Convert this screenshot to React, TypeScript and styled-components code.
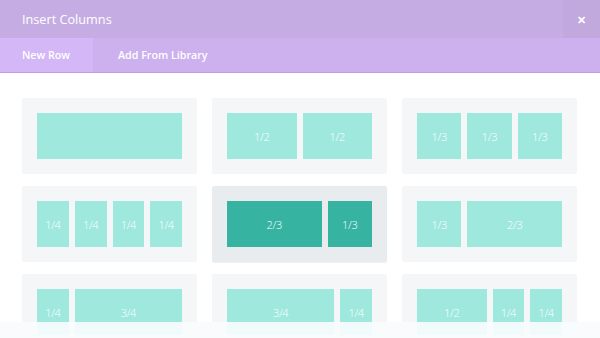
import * as React from "react";
import styled, {createGlobalStyle} from "styled-components";

const GlobalStyle = createGlobalStyle`
  html, body {
    margin: 0;
    padding: 0;
    background: #ffffff;
  }
  body {
    font-family: "Open Sans", "Liberation Sans", sans-serif;
  }
`;

const Modal = styled.div`
  position: relative;
  width: 600px;
  height: 338px;
  overflow: hidden;
  background: #ffffff;
`;

const TitleBar = styled.div`
  display: flex;
  align-items: center;
  height: 38px;
  background: #c5ade3;
`;

const Title = styled.div`
  flex: 1;
  padding-left: 22px;
  color: #ffffff;
  font-size: 12.7px;
`;

const CloseButton = styled.div`
  display: flex;
  align-items: center;
  justify-content: center;
  width: 37px;
  height: 38px;
  background: #c1a8dd;
  color: #ffffff;
  font-size: 11px;
  font-weight: 700;
`;

const TabBar = styled.div`
  display: flex;
  height: 34px;
  background: #ccb1ee;
  border-bottom: 1px solid #b99fe3;
`;

const Tab = styled.div<{ $active?: boolean }>`
  display: flex;
  align-items: center;
  box-sizing: border-box;
  white-space: nowrap;
  padding: 0 ${p => (p.$active ? "22px" : "25px")};
  width: ${p => (p.$active ? "93px" : "auto")};
  background: ${p => (p.$active ? "#d3b7f7" : "transparent")};
  color: #ffffff;
  font-size: 10.7px;
  font-weight: 600;
`;

const Grid = styled.div`
  display: grid;
  grid-template-columns: repeat(3, 175px);
  column-gap: 15px;
  row-gap: 12px;
  padding: 25px 0 0 22px;
`;

const Card = styled.div<{ $selected?: boolean }>`
  display: grid;
  grid-template-columns: repeat(12, 1fr);
  column-gap: 6px;
  height: 46px;
  padding: 15px;
  border-radius: 2px;
  background: ${p => (p.$selected ? "#e9ecef" : "#f5f6f8")};
  box-shadow: ${p => (p.$selected ? "0 1px 1px rgba(0,0,0,0.06)" : "none")};
`;

const Column = styled.div<{ $span: number; $selected?: boolean }>`
  grid-column: span ${p => p.$span};
  display: flex;
  align-items: center;
  justify-content: center;
  background: ${p => (p.$selected ? "#36b3a1" : "#9fe8de")};
  color: #ffffff;
  font-size: 11px;
  font-weight: 300;
  letter-spacing: -0.3px;
`;

const Fade = styled.div`
  position: absolute;
  left: 0;
  right: 0;
  bottom: 0;
  height: 16px;
  background: rgba(247, 252, 253, 0.93);
`;

type Layout = { cols: [string, number][]; selected?: boolean };

// spans are out of 12, same as the builder's grid
const layouts: Layout[] = [
  {cols: [["", 12]]},
  {cols: [["1/2", 6], ["1/2", 6]]},
  {cols: [["1/3", 4], ["1/3", 4], ["1/3", 4]]},
  {cols: [["1/4", 3], ["1/4", 3], ["1/4", 3], ["1/4", 3]]},
  {cols: [["2/3", 8], ["1/3", 4]], selected: true},
  {cols: [["1/3", 4], ["2/3", 8]]},
  {cols: [["1/4", 3], ["3/4", 9]]},
  {cols: [["3/4", 9], ["1/4", 3]]},
  {cols: [["1/2", 6], ["1/4", 3], ["1/4", 3]]},
];

const App = () => {
  return (
    <Modal>
      <GlobalStyle/>
      <TitleBar>
        <Title>Insert Columns</Title>
        <CloseButton>✕</CloseButton>
      </TitleBar>
      <TabBar>
        <Tab $active>New Row</Tab>
        <Tab>Add From Library</Tab>
      </TabBar>
      <Grid>
        {layouts.map((layout, i) => (
          <Card key={i} $selected={layout.selected}>
            {layout.cols.map(([label, span], j) => (
              <Column key={j} $span={span} $selected={layout.selected}>
                {label}
              </Column>
            ))}
          </Card>
        ))}
      </Grid>
      <Fade/>
    </Modal>
  )
};

export default App;
